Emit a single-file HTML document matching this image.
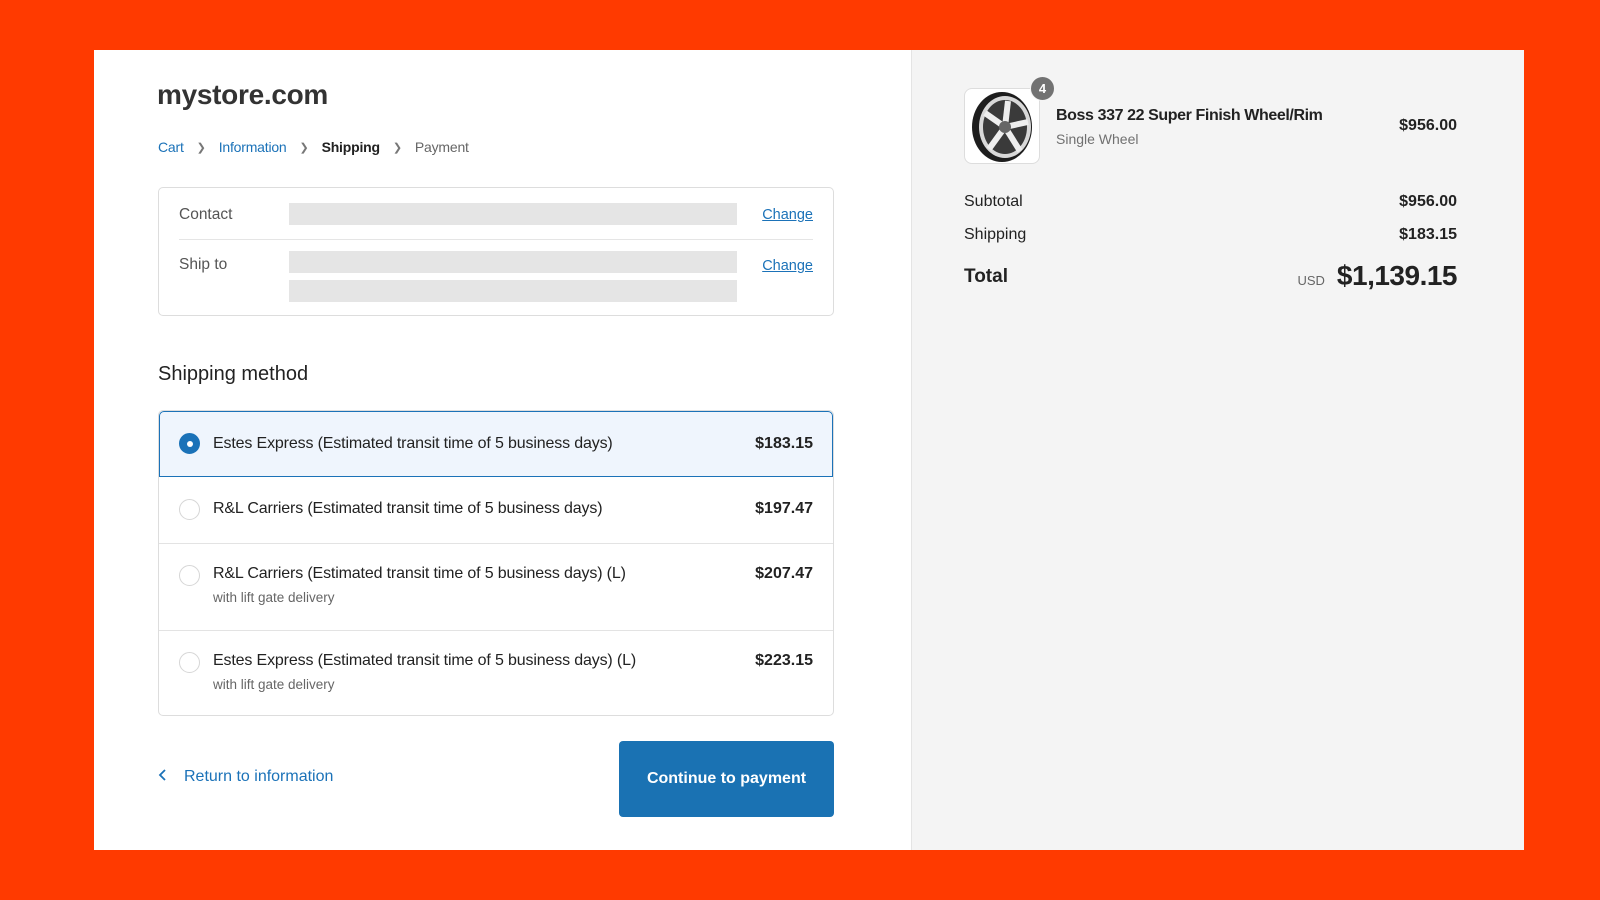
<!DOCTYPE html>
<html><head><meta charset="utf-8"><style>
*{box-sizing:border-box;margin:0;padding:0}
body{width:1600px;height:900px;background:#ff3a00;font-family:"Liberation Sans",sans-serif;position:relative;overflow:hidden;color:#222}
.left{position:absolute;left:94px;top:50px;width:817px;height:800px;background:#fff}
.right{position:absolute;left:911px;top:50px;width:613px;height:800px;background:#f4f4f4;border-left:1px solid #e4e4e4}
.abs{position:absolute}
.logo{left:63px;top:29px;font-size:28px;font-weight:bold;color:#333;letter-spacing:-0.3px}
.bc{left:64px;top:89px;font-size:14px;display:flex;gap:0;align-items:center;letter-spacing:-0.2px}
.bc span{margin-right:13px}
.bc .sep{color:#777;margin-right:13px;font-size:11px}
.blue{color:#1b72b8}
.card{left:64px;top:137px;width:676px;height:129px;border:1px solid #ddd;border-radius:5px}
.lbl{font-size:15.5px;color:#555}
.bar{background:#e5e5e5;height:22px;width:448px}
.chg{font-size:14.5px;color:#1b72b8;text-decoration:underline}
.opts{left:64px;top:360px;width:676px;height:306px;border:1px solid #ddd;border-radius:5px;overflow:hidden}
.row{position:absolute;left:0;width:100%;border-top:1px solid #e3e3e3}
.radio{position:absolute;left:20px;width:21px;height:21px;border-radius:50%;border:1px solid #d6d6d6;background:#fff}
.otext{position:absolute;left:54px;font-size:16px;color:#222;letter-spacing:-0.15px}
.sub{position:absolute;left:54px;font-size:13.5px;color:#666}
.price{position:absolute;right:20px;font-size:16px;font-weight:bold;color:#222}
.btn{left:525px;top:691px;width:215px;height:76px;background:#1a72b3;border-radius:4px;color:#fff;font-size:16px;font-weight:bold;display:flex;align-items:center;justify-content:center}
.r{font-size:16px;color:#222}
</style></head><body>
<div class="left">
 <div class="abs logo">mystore.com</div>
 <div class="abs bc"><span class="blue">Cart</span><span class="sep">&#x276F;</span><span class="blue">Information</span><span class="sep">&#x276F;</span><span style="color:#222;font-weight:bold">Shipping</span><span class="sep">&#x276F;</span><span style="color:#666">Payment</span></div>
 <div class="abs card">
  <div class="abs lbl" style="left:20px;top:18px">Contact</div>
  <div class="abs bar" style="left:130px;top:15px"></div>
  <div class="abs chg" style="right:20px;top:19px">Change</div>
  <div class="abs" style="left:20px;right:20px;top:51px;border-top:1px solid #e5e5e5"></div>
  <div class="abs lbl" style="left:20px;top:68px">Ship to</div>
  <div class="abs bar" style="left:130px;top:63px"></div>
  <div class="abs bar" style="left:130px;top:92px"></div>
  <div class="abs chg" style="right:20px;top:70px">Change</div>
 </div>
 <div class="abs" style="left:64px;top:313px;font-size:20px;color:#222">Shipping method</div>
 <div class="abs opts">
  <div class="row" style="top:0;height:66px;border:1px solid #1b72b8;border-radius:5px 5px 0 0;background:#eff5fd">
   <div class="radio" style="top:21px;left:19px;background:#1b72b8;border-color:#1b72b8"><div style="position:absolute;left:7px;top:7px;width:6px;height:6px;border-radius:50%;background:#fff"></div></div>
   <div class="otext" style="top:23px;left:53px">Estes Express (Estimated transit time of 5 business days)</div>
   <div class="price" style="top:23px;right:19px">$183.15</div>
  </div>
  <div class="row" style="top:66px;height:66px;border-top:none">
   <div class="radio" style="top:22px"></div>
   <div class="otext" style="top:23px">R&amp;L Carriers (Estimated transit time of 5 business days)</div>
   <div class="price" style="top:23px">$197.47</div>
  </div>
  <div class="row" style="top:132px;height:87px">
   <div class="radio" style="top:21px"></div>
   <div class="otext" style="top:21px">R&amp;L Carriers (Estimated transit time of 5 business days) (L)</div>
   <div class="sub" style="top:46px">with lift gate delivery</div>
   <div class="price" style="top:21px">$207.47</div>
  </div>
  <div class="row" style="top:219px;height:87px">
   <div class="radio" style="top:21px"></div>
   <div class="otext" style="top:21px">Estes Express (Estimated transit time of 5 business days) (L)</div>
   <div class="sub" style="top:46px">with lift gate delivery</div>
   <div class="price" style="top:21px">$223.15</div>
  </div>
 </div>
 <div class="abs blue" style="left:64px;top:718px;font-size:16px"><svg width="10" height="14" viewBox="0 0 10 14" style="margin-right:16px;vertical-align:-1px"><path d="M7 2 L2 7 L7 12" fill="none" stroke="#1b72b8" stroke-width="1.8"/></svg>Return to information</div>
 <div class="abs btn">Continue to payment</div>
</div>
<div class="right">
 <div class="abs" style="left:52px;top:38px;width:76px;height:76px;border:1px solid #ddd;border-radius:8px;background:#fff;overflow:hidden">
  <svg width="76" height="76" viewBox="0 0 76 76"><ellipse cx="37" cy="38" rx="30" ry="35" fill="#1d1d1d"/><ellipse cx="40" cy="38" rx="26" ry="31" fill="#d8d8d8"/><ellipse cx="40" cy="38" rx="22" ry="27" fill="#3a3a3a"/>
  <g stroke="#eee" stroke-width="6"><line x1="40" y1="38" x2="43" y2="12"/><line x1="40" y1="38" x2="63" y2="33"/><line x1="40" y1="38" x2="55" y2="62"/><line x1="40" y1="38" x2="24" y2="60"/><line x1="40" y1="38" x2="20" y2="24"/></g><circle cx="40" cy="38" r="6" fill="#666"/></svg>
 </div>
 <div class="abs" style="left:118px;top:26px;width:25px;height:25px;border-radius:50%;background:#727272;color:#fff;font-size:13px;font-weight:bold;text-align:center;line-height:23px;border:1px solid #f4f4f4">4</div>
 <div class="abs" style="left:144px;top:57px;font-size:16px;font-weight:bold;color:#222;letter-spacing:-0.4px">Boss 337 22 Super Finish Wheel/Rim</div>
 <div class="abs" style="left:144px;top:81px;font-size:14px;color:#707070">Single Wheel</div>
 <div class="abs r" style="right:67px;top:67px;font-weight:bold">$956.00</div>
 <div class="abs r" style="left:52px;top:143px">Subtotal</div>
 <div class="abs r" style="right:67px;top:143px;font-weight:bold">$956.00</div>
 <div class="abs r" style="left:52px;top:176px">Shipping</div>
 <div class="abs r" style="right:67px;top:176px;font-weight:bold">$183.15</div>
 <div class="abs" style="left:52px;top:216px;font-size:19px;font-weight:bold;color:#222">Total</div>
 <div class="abs" style="right:67px;top:210px;display:flex;align-items:baseline"><span style="font-size:13px;color:#666;margin-right:12px">USD</span><span style="font-size:28px;font-weight:bold;color:#222;letter-spacing:-0.5px">$1,139.15</span></div>
</div>
</body></html>
